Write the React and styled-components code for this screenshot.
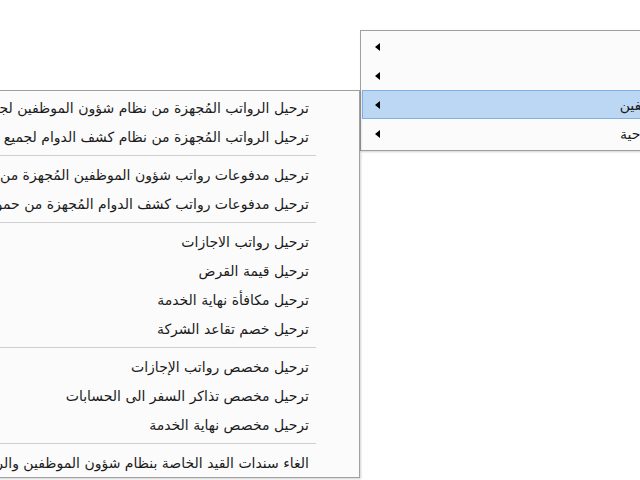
import styled, { createGlobalStyle } from 'styled-components';

const GlobalStyle = createGlobalStyle`
  html, body {
    margin: 0;
    padding: 0;
    background: #ffffff;
    overflow: hidden;
  }
  body {
    font-family: "DejaVu Sans", "Noto Sans", sans-serif;
  }
`;

const Screen = styled.div`
  position: relative;
  width: 640px;
  height: 480px;
  overflow: hidden;
  background: #ffffff;
`;

const Menu = styled.div`
  position: absolute;
  direction: rtl;
  display: flex;
  flex-direction: column;
  background: #fbfbfb;
  border: 1px solid #a0a0a0;
  box-shadow: 1px 1px 2px rgba(0, 0, 0, 0.18);
  font-size: 14px;
  color: #1b1b1b;
`;

const ParentMenu = styled(Menu)`
  top: 30px;
  left: 360px;
  width: 380px;
  padding: 1px 1px 2px;
`;

const SubMenu = styled(Menu)`
  top: 90px;
  right: 280px;
  width: 600px;
  padding: 2px 0 0;
  z-index: 2;
`;

const ParentItem = styled.div`
  height: 27px;
  display: flex;
  align-items: center;
  justify-content: space-between;
  padding: 0 32px 0 12px;
  white-space: nowrap;
  border: 1px solid ${(p) => (p.$active ? '#7fb0e4' : 'transparent')};
  background: ${(p) => (p.$active ? '#bcd7f3' : 'transparent')};
`;

const Arrow = styled.span`
  width: 0;
  height: 0;
  border-top: 4px solid transparent;
  border-bottom: 4px solid transparent;
  border-right: 5px solid #000;
  order: 2;
`;

const SubItem = styled.div`
  height: 29px;
  display: flex;
  align-items: center;
  padding-right: 50px;
  white-space: nowrap;
`;

const Separator = styled.div`
  height: 9px;
  display: flex;
  align-items: center;

  &::after {
    content: '';
    flex: 1;
    height: 1px;
    margin-right: 43px;
    background: #cfcfcf;
  }
`;

const parentItems = [
  { label: 'عام', active: false },
  { label: 'قيد', active: false },
  { label: 'نظام الموظفين', active: true },
  { label: 'القيود الافتتاحية', active: false },
];

const groups = [
  [
    'ترحيل الرواتب المُجهزة من نظام شؤون الموظفين لجميع الموظفين',
    'ترحيل الرواتب المُجهزة من نظام كشف الدوام  لجميع الموظفين',
  ],
  [
    'ترحيل مدفوعات رواتب شؤون الموظفين المُجهزة من نظام الرواتب',
    'ترحيل مدفوعات رواتب كشف الدوام المُجهزة من حمولة البنك',
  ],
  [
    'ترحيل رواتب الاجازات',
    'ترحيل قيمة القرض',
    'ترحيل مكافأة نهاية الخدمة',
    'ترحيل خصم تقاعد الشركة',
  ],
  [
    'ترحيل مخصص رواتب الإجازات',
    'ترحيل مخصص تذاكر السفر الى الحسابات',
    'ترحيل مخصص نهاية الخدمة',
  ],
  ['الغاء سندات القيد الخاصة بنظام شؤون الموظفين والرواتب'],
];

const App = () => {
  return (
    <Screen>
      <GlobalStyle />
      <ParentMenu>
        {parentItems.map((item) => (
          <ParentItem key={item.label} $active={item.active}>
            <span>{item.label}</span>
            <Arrow />
          </ParentItem>
        ))}
      </ParentMenu>
      <SubMenu>
        {groups.map((group, gi) => (
          <div key={gi}>
            {gi > 0 && <Separator />}
            {group.map((label) => (
              <SubItem key={label}>{label}</SubItem>
            ))}
          </div>
        ))}
      </SubMenu>
    </Screen>
  );
};

export default App;
